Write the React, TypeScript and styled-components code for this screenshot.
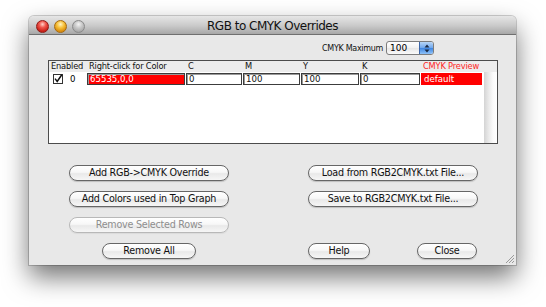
import React from 'react'
import styled, { createGlobalStyle } from 'styled-components'

const GlobalStyle = createGlobalStyle`
  html, body {
    margin: 0;
    padding: 0;
    background: #ffffff;
  }
  body {
    font-family: 'DejaVu Sans', 'Liberation Sans', sans-serif;
    color: #000;
  }
`

const Page = styled.div`
  width: 546px;
  height: 307px;
  padding: 16px 0 0 29px;
  box-sizing: border-box;
  overflow: hidden;
`

const Window = styled.div`
  position: relative;
  width: 487px;
  height: 249px;
  border-radius: 5px 5px 0 0;
  background: #e8e8e8;
  box-shadow: 0 12px 26px rgba(0, 0, 0, 0.55), 0 0 0 1px rgba(0, 0, 0, 0.18);
  display: flex;
  flex-direction: column;
`

const TitleBar = styled.div`
  position: relative;
  height: 18px;
  flex: none;
  display: flex;
  align-items: center;
  justify-content: center;
  border-radius: 5px 5px 0 0;
  border-bottom: 1px solid #6f6f6f;
  background: linear-gradient(#e6e6e6, #c9c9c9 55%, #a7a7a7);
`

const Lights = styled.div`
  position: absolute;
  left: 7px;
  top: 4px;
  display: flex;
  gap: 5px;
`

const Light = styled.span<{ $tone: 'red' | 'yellow' | 'grey' }>`
  width: 13px;
  height: 13px;
  border-radius: 50%;
  box-sizing: border-box;
  border: 1px solid
    ${({ $tone }) => ($tone === 'red' ? '#8e1b17' : $tone === 'yellow' ? '#a56a10' : '#8a8a8a')};
  background: ${({ $tone }) =>
    $tone === 'red'
      ? 'radial-gradient(circle at 50% 30%, #ffd0c8 0, #f0564c 35%, #c71d14 75%, #e4554b 100%)'
      : $tone === 'yellow'
      ? 'radial-gradient(circle at 50% 30%, #fff4c6 0, #f7c13a 38%, #d98b0c 75%, #f2b24a 100%)'
      : 'radial-gradient(circle at 50% 30%, #f4f4f4 0, #c8c8c8 40%, #a6a6a6 80%, #c0c0c0 100%)'};
`

const Title = styled.div`
  font-size: 12px;
  letter-spacing: -0.5px;
  color: #111;
  margin-top: 1px;
`

const Content = styled.div`
  flex: 1;
  display: flex;
  flex-direction: column;
`

const TopRow = styled.div`
  display: flex;
  justify-content: flex-end;
  align-items: center;
  gap: 3px;
  margin-top: 6px;
  padding-right: 82px;
  height: 14px;
`

const SmallLabel = styled.span`
  font-size: 8px;
  letter-spacing: -0.3px;
  color: #111;
`

const Popup = styled.div`
  width: 48px;
  height: 14px;
  box-sizing: border-box;
  border: 1px solid #7c7c7c;
  border-radius: 3px;
  background: linear-gradient(#ffffff, #f1f1f1 50%, #e6e6e6 51%, #fafafa);
  display: flex;
  overflow: hidden;
`

const PopupValue = styled.span`
  flex: 1;
  font-size: 9px;
  padding-left: 3px;
  line-height: 12px;
`

const PopupArrows = styled.span`
  width: 13px;
  border-left: 1px solid #3d66a8;
  background: linear-gradient(#b8d6f7, #6ea6ec 50%, #3d84e0 51%, #8fc2f8);
  display: flex;
  align-items: center;
  justify-content: center;
`

const TableBox = styled.div`
  margin: 5px 0 0 19px;
  width: 450px;
  height: 84px;
  box-sizing: border-box;
  border: 1px solid #4c4c4c;
  background: #ffffff;
  display: flex;
  flex-direction: column;
`

const columns = '38px 99px 57px 58px 59px 61px 62px'

const HeaderRow = styled.div`
  height: 11px;
  display: grid;
  grid-template-columns: ${columns} 1fr;
  background: #ececec;
  font-size: 8.3px;
  letter-spacing: -0.2px;
  line-height: 11px;
  color: #111;
`

const HeaderCell = styled.span<{ $red?: boolean }>`
  padding-left: 2px;
  white-space: nowrap;
  color: ${({ $red }) => ($red ? '#ff1f1f' : '#111')};
`

const TableBody = styled.div`
  flex: 1;
  display: flex;
`

const Rows = styled.div`
  flex: 1;
  padding-top: 1px;
`

const DataRow = styled.div`
  display: grid;
  grid-template-columns: ${columns};
  height: 12px;
  font-size: 8.6px;
  line-height: 10px;
`

const EnabledCell = styled.div`
  display: flex;
  align-items: center;
  gap: 7px;
  padding-left: 4px;
`

const EditCell = styled.div<{ $red?: boolean; $plain?: boolean }>`
  box-sizing: border-box;
  margin-right: 1px;
  border: ${({ $plain }) => ($plain ? '1px solid #ff0000' : '1px solid #3c3c3c')};
  box-shadow: ${({ $plain }) => ($plain ? 'none' : 'inset 1px 1px 0 #9a9a9a')};
  background: ${({ $red }) => ($red ? '#ff0000' : '#ffffff')};
  color: ${({ $red }) => ($red ? '#ffffff' : '#111')};
  padding-left: 2px;
  white-space: nowrap;
  overflow: hidden;
`

const ScrollTrack = styled.div`
  width: 13px;
  background: linear-gradient(90deg, #d4d4d4, #e9e9e9 35%, #fbfbfb 70%, #ffffff);
`

const ButtonGrid = styled.div`
  margin: 21px 0 0 40px;
  display: grid;
  grid-template-columns: 160px 170px;
  grid-template-rows: repeat(4, 16px);
  column-gap: 79px;
  row-gap: 10px;
`

const Pill = styled.div<{ $width?: number; $disabled?: boolean }>`
  justify-self: center;
  width: ${({ $width }) => ($width ? `${$width}px` : '100%')};
  height: 16px;
  box-sizing: border-box;
  border-radius: 8px;
  border: 1px solid ${({ $disabled }) => ($disabled ? '#b8b8b8' : '#666666')};
  background: linear-gradient(#ffffff, #f7f7f7 45%, #e9e9e9 55%, #f6f6f6);
  box-shadow: 0 1px 1px rgba(0, 0, 0, ${({ $disabled }) => ($disabled ? 0.06 : 0.18)});
  color: ${({ $disabled }) => ($disabled ? '#8e8e8e' : '#111')};
  font-size: 9.6px;
  letter-spacing: -0.25px;
  line-height: 14px;
  text-align: center;
  white-space: nowrap;
`

const PairRow = styled.div`
  display: flex;
  justify-content: space-between;
  padding-right: 1px;
`

const Grip = styled.svg`
  position: absolute;
  right: 1px;
  bottom: 1px;
`

const Check = () => (
  <svg width="10" height="10" viewBox="0 0 10 10">
    <rect x="0.5" y="0.5" width="9" height="9" fill="#fff" stroke="#333" />
    <path d="M2 4.6 L4.2 7.4 L8.8 0.8" fill="none" stroke="#111" strokeWidth="1.5" />
  </svg>
)

const App: React.FC = () => {
  return (
    <Page>
      <GlobalStyle />
      <Window>
        <TitleBar>
          <Lights>
            <Light $tone="red" />
            <Light $tone="yellow" />
            <Light $tone="grey" />
          </Lights>
          <Title>RGB to CMYK Overrides</Title>
        </TitleBar>
        <Content>
          <TopRow>
            <SmallLabel>CMYK Maximum</SmallLabel>
            <Popup>
              <PopupValue>100</PopupValue>
              <PopupArrows>
                <svg width="6" height="9" viewBox="0 0 6 9">
                  <path d="M3 0.5 L5.5 3.5 L0.5 3.5 Z M3 8.5 L5.5 5.5 L0.5 5.5 Z" fill="#1b2a44" />
                </svg>
              </PopupArrows>
            </Popup>
          </TopRow>

          <TableBox>
            <HeaderRow>
              <HeaderCell>Enabled</HeaderCell>
              <HeaderCell>Right-click for Color</HeaderCell>
              <HeaderCell>C</HeaderCell>
              <HeaderCell>M</HeaderCell>
              <HeaderCell>Y</HeaderCell>
              <HeaderCell>K</HeaderCell>
              <HeaderCell $red>CMYK Preview</HeaderCell>
              <span />
            </HeaderRow>
            <TableBody>
              <Rows>
                <DataRow>
                  <EnabledCell>
                    <Check />
                    <span>0</span>
                  </EnabledCell>
                  <EditCell $red>65535,0,0</EditCell>
                  <EditCell>0</EditCell>
                  <EditCell>100</EditCell>
                  <EditCell>100</EditCell>
                  <EditCell>0</EditCell>
                  <EditCell $red $plain>default</EditCell>
                </DataRow>
              </Rows>
              <ScrollTrack />
            </TableBody>
          </TableBox>

          <ButtonGrid>
            <Pill>Add RGB-&gt;CMYK Override</Pill>
            <Pill>Load from RGB2CMYK.txt File...</Pill>
            <Pill>Add Colors used in Top Graph</Pill>
            <Pill>Save to RGB2CMYK.txt File...</Pill>
            <Pill $disabled>Remove Selected Rows</Pill>
            <span />
            <Pill $width={94}>Remove All</Pill>
            <PairRow>
              <Pill $width={62}>Help</Pill>
              <Pill $width={60}>Close</Pill>
            </PairRow>
          </ButtonGrid>
        </Content>
        <Grip width="11" height="11" viewBox="0 0 11 11">
          <path d="M10 2 L2 10 M10 5 L5 10 M10 8 L8 10" stroke="#9a9a9a" strokeWidth="1" />
        </Grip>
      </Window>
    </Page>
  )
}

export default App
